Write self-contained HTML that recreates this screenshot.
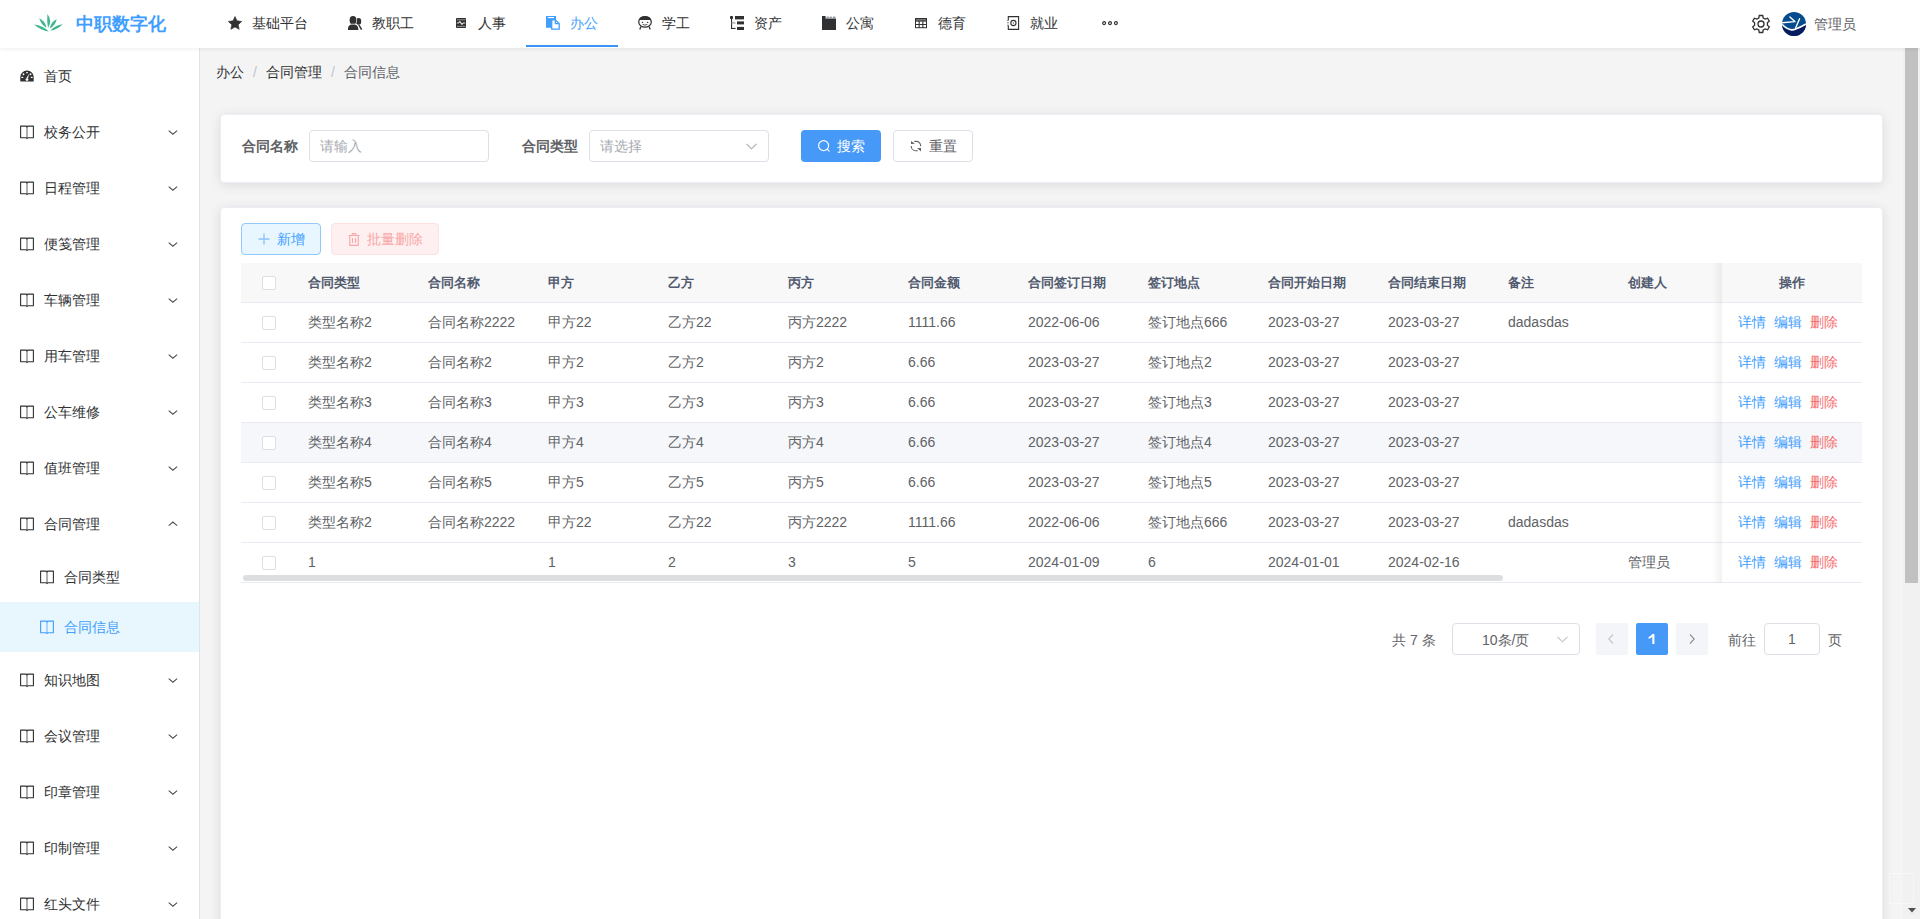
<!DOCTYPE html>
<html><head><meta charset="utf-8"><style>
*{box-sizing:border-box;margin:0;padding:0}
html,body{width:1920px;height:919px;overflow:hidden;background:#f4f4f4;font-family:"Liberation Sans",sans-serif;font-size:14px;color:#606266}
.abs{position:absolute}
#header{position:absolute;left:0;top:0;width:1920px;height:48px;background:#fff;box-shadow:0 1px 4px rgba(0,21,41,.08);z-index:10}
.logo-t{position:absolute;left:76px;top:12px;font-size:18px;font-weight:bold;color:#409eff;line-height:24px}
.nav{position:absolute;top:0;height:48px;color:#303133;white-space:nowrap}
.nav svg{position:absolute;top:16px}
.nav span{position:absolute;top:14px;line-height:18px}
.act{color:#409eff}
#side{position:absolute;left:0;top:48px;width:200px;height:871px;background:#fff;border-right:1px solid #e1e3ea;z-index:5;overflow:hidden}
.mi{position:absolute;left:0;width:199px;height:56px;color:#303133}
.mi svg.ic{position:absolute;left:20px;top:21px}
.mi span{position:absolute;left:44px;top:19px;line-height:18px}
.mi svg.ar{position:absolute;left:168px;top:26px}
.sub{height:50px}
.sub svg.ic{left:40px;top:18px}
.sub span{left:64px;top:16px}
.sub.act{background:#e8f6fe;color:#409eff}
.t{position:absolute;white-space:nowrap;line-height:18px}
.card{position:absolute;background:#fff;border:1px solid #ebeef5;border-radius:4px;box-shadow:0 2px 12px 0 rgba(0,0,0,.1)}
.lbl{position:absolute;font-weight:bold;color:#606266;line-height:18px;white-space:nowrap}
.box{position:absolute;border:1px solid #dcdfe6;border-radius:4px;background:#fff}
.cb{position:absolute;width:14px;height:14px;border:1px solid #dcdfe6;border-radius:2px;background:#fff}
.hd{font-weight:bold;color:#515a6e;font-size:13px}
.lk{color:#409eff}
.dl{color:#f56c6c}
</style></head><body>
<div id="header">
<svg class="abs" style="left:28px;top:8px" width="42" height="30" viewBox="0 0 42 30"><g fill="#40b690"><path d="M20.0 20.0 Q24.7 12.8 19.4 6.0 Q18.7 13.0 20.0 20.0Z"/><path d="M18.4 19.8 Q17.4 13.0 11.2 10.2 Q13.0 16.4 18.4 19.8Z"/><path d="M21.9 20.6 Q27.2 17.3 28.8 11.2 Q22.7 13.9 21.9 20.6Z"/><path d="M21.0 23.6 Q14.8 17.3 6.0 16.4 Q12.5 22.0 21.0 23.6Z"/><path d="M22.2 22.8 Q29.5 21.4 34.8 16.2 Q27.1 16.8 22.2 22.8Z"/></g></svg>
<div class="logo-t">中职数字化</div>
<div class="nav" style="left:228px;width:80px"><span style="left:24px">基础平台</span></div>
<div class="abs" style="left:228px;top:16px;width:16px;height:16px;line-height:0"><svg width="14" height="14" viewBox="0 0 14 14"><path fill="#303133" stroke="#303133" stroke-width="0.6" stroke-linejoin="round" d="M7.00 0.50 L9.00 4.85 L13.75 5.41 L10.23 8.65 L11.17 13.34 L7.00 11.00 L2.83 13.34 L3.77 8.65 L0.25 5.41 L5.00 4.85Z"/></svg></div>
<div class="nav" style="left:348px;width:66px"><span style="left:24px">教职工</span></div>
<div class="abs" style="left:348px;top:16px;width:16px;height:16px;line-height:0"><svg width="16" height="16" viewBox="0 0 16 16"><g fill="#303133"><ellipse cx="10.6" cy="5.4" rx="2.6" ry="3.3"/><path d="M10.2 9 L11.6 8.8 L14.3 13.2 L12.9 13.9Z"/></g><g fill="#303133" stroke="#fff" stroke-width="1.4" paint-order="stroke"><ellipse cx="5" cy="4.3" rx="3.4" ry="4.2"/><path d="M-0.2 14 C-0.2 10.2 1.4 8.7 3.6 8.4 L6.6 8.4 C8.8 8.7 10.4 10.2 10.4 14Z"/></g></svg></div>
<div class="nav" style="left:454px;width:52px"><span style="left:24px">人事</span></div>
<div class="abs" style="left:456px;top:18px;width:16px;height:16px;line-height:0"><svg width="10" height="10" viewBox="0 0 10 10"><rect x="0" y="0" width="10" height="10" rx="0.8" fill="#303133"/><rect x="1" y="1.4" width="8.4" height="0.9" fill="#a0a0a0"/><rect x="1" y="7.9" width="8.4" height="0.9" fill="#a0a0a0"/><path d="M0.8 5 L2.4 5 L3.9 3.6 L5.9 6.3 L7.2 5 L9.2 5" stroke="#e0e0e0" stroke-width="1.1" fill="none"/></svg></div>
<div class="nav act" style="left:546px;width:52px"><span style="left:24px">办公</span></div>
<div class="abs" style="left:546px;top:16px;width:16px;height:16px;line-height:0"><svg width="15" height="15" viewBox="0 0 15 15"><path fill="#409eff" d="M0 0 L10 0 L10 11.8 L0 11.8Z"/><rect x="1.8" y="1" width="6.2" height="1.1" fill="#fff"/><path d="M5.7 3.9 L9.4 3.9 L13.2 7.7 L13.2 13.2 L5.7 13.2Z" fill="#fff" stroke="#409eff" stroke-width="1.3" stroke-linejoin="miter"/><path d="M9.4 3.9 L9.4 7.7 L13.2 7.7" fill="none" stroke="#409eff" stroke-width="1.3"/></svg></div>
<div class="nav" style="left:638px;width:52px"><span style="left:24px">学工</span></div>
<div class="abs" style="left:638px;top:16px;width:16px;height:16px;line-height:0"><svg width="14" height="14" viewBox="0 0 14 14"><ellipse cx="7" cy="5.9" rx="6.3" ry="5.3" fill="none" stroke="#303133" stroke-width="1.25"/><path d="M0.8 4 C1.6 0.9 4 0.5 7 0.5 C10 0.5 12.4 0.9 13.2 4Z" fill="#303133"/><ellipse cx="4.4" cy="6.3" rx="0.8" ry="0.65" fill="#303133"/><ellipse cx="9.6" cy="6.3" rx="0.8" ry="0.65" fill="#303133"/><path d="M4.6 8.4 Q7 9.9 9.4 8.4" fill="none" stroke="#505257" stroke-width="1"/><path d="M2.8 10.8 L1.8 13.4 M11.2 10.8 L12.2 13.4" stroke="#303133" stroke-width="1.3"/></svg></div>
<div class="nav" style="left:730px;width:52px"><span style="left:24px">资产</span></div>
<div class="abs" style="left:730px;top:16px;width:16px;height:16px;line-height:0"><svg width="14" height="14" viewBox="0 0 14 14"><g fill="#303133"><rect x="0" y="0" width="3" height="3" rx="0.8"/><rect x="1" y="2.5" width="1.1" height="10.4"/><rect x="1" y="11.9" width="4.6" height="1.1"/><rect x="1.5" y="6.4" width="4" height="1.1" fill="#909399"/><rect x="5" y="0" width="9" height="3.4"/><rect x="7" y="5.4" width="7" height="3"/><rect x="7" y="10.9" width="7" height="3.1"/></g></svg></div>
<div class="nav" style="left:822px;width:52px"><span style="left:24px">公寓</span></div>
<div class="abs" style="left:822px;top:16px;width:16px;height:16px;line-height:0"><svg width="14" height="14" viewBox="0 0 14 14"><path d="M0 0 L3.6 0 L3.6 2.6 L14 2.6 L14 14 L0 14Z" fill="#303133"/><g fill="#909399"><rect x="4.6" y="0.6" width="2.2" height="1.6"/><rect x="7.6" y="0.6" width="2.2" height="1.6"/><rect x="10.8" y="0.6" width="2.6" height="1.6"/></g></svg></div>
<div class="nav" style="left:914px;width:52px"><span style="left:24px">德育</span></div>
<div class="abs" style="left:915px;top:18px;width:16px;height:16px;line-height:0"><svg width="12" height="11" viewBox="0 0 12 11"><rect x="0" y="0" width="12" height="10.2" fill="#303133"/><g fill="#fff"><rect x="1" y="3.6" width="2.6" height="2.4"/><rect x="4.7" y="3.6" width="2.6" height="2.4"/><rect x="8.4" y="3.6" width="2.6" height="2.4"/><rect x="1" y="7" width="2.6" height="2.2"/><rect x="4.7" y="7" width="2.6" height="2.2"/><rect x="8.4" y="7" width="2.6" height="2.2"/></g><rect x="1" y="1" width="10" height="1.6" fill="#777"/></svg></div>
<div class="nav" style="left:1006px;width:52px"><span style="left:24px">就业</span></div>
<div class="abs" style="left:1007px;top:16px;width:16px;height:16px;line-height:0"><svg width="13" height="14" viewBox="0 0 13 14"><path d="M1.3 4 L1.3 0.6 L11.6 0.6 L11.6 13.4 L1.3 13.4 L1.3 9.5" fill="none" stroke="#303133" stroke-width="1.1"/><circle cx="6.4" cy="7" r="2.6" fill="none" stroke="#303133" stroke-width="1.1"/><circle cx="6.4" cy="7" r="0.7" fill="#606266"/><path d="M0 4.3 L2 4.3 M0 6.8 L2 6.8 M0 9.2 L2 9.2" stroke="#606266" stroke-width="0.8"/></svg></div>
<svg class="abs" style="left:1101px;top:20px" width="18" height="6" viewBox="0 0 18 6"><g fill="none" stroke="#303133" stroke-width="1.2"><circle cx="3.1" cy="3.1" r="1.45"/><circle cx="9" cy="3.1" r="1.45"/><circle cx="14.9" cy="3.1" r="1.45"/></g></svg>
<div class="abs" style="left:526px;top:45px;width:92px;height:2px;background:#3a93f7"></div>
<svg class="abs" style="left:1751px;top:14px" width="20" height="20" viewBox="0 0 20 20"><path fill="none" stroke="#303133" stroke-width="1.3" d="M8.3 1.5 L11.7 1.5 L12.2 4 L14.2 5.1 L16.6 4.2 L18.3 7.2 L16.4 8.8 L16.4 11.2 L18.3 12.8 L16.6 15.8 L14.2 14.9 L12.2 16 L11.7 18.5 L8.3 18.5 L7.8 16 L5.8 14.9 L3.4 15.8 L1.7 12.8 L3.6 11.2 L3.6 8.8 L1.7 7.2 L3.4 4.2 L5.8 5.1 L7.8 4Z"/><circle cx="10" cy="10" r="3" fill="none" stroke="#303133" stroke-width="1.3"/></svg>
<svg class="abs" style="left:1782px;top:12px" width="24" height="24" viewBox="0 0 24 24"><defs><clipPath id="avc"><circle cx="12" cy="12" r="12"/></clipPath></defs><g clip-path="url(#avc)"><rect width="24" height="24" fill="#054c8e"/><path d="M0 12.4 Q5 17.2 9.5 17.9 Q13 18.2 24 12 L24 24 L0 24Z" fill="#061c5e"/><path d="M0 12.4 Q5 17.2 9.5 17.9 Q13 18.2 24 12" fill="none" stroke="#fff" stroke-width="1.6"/><path d="M0 10.7 L12.9 9.6 M7.9 5 L12.9 9.6 M17.6 6.8 L13.6 16" fill="none" stroke="#fff" stroke-width="1.4" stroke-linecap="round"/></g></svg>
<div class="t" style="left:1814px;top:15px;color:#606266">管理员</div>
</div>
<div id="side">
<div class="mi" style="top:0px"><svg class="ic" style="top:22px" width="14" height="12" viewBox="0 0 14 12"><path fill="#303133" d="M0.3 11.6 L0.3 7.5 C0.3 3.6 3.3 0.6 7 0.6 C10.7 0.6 13.7 3.6 13.7 7.5 L13.7 11.6Z"/><g fill="#fff"><rect x="6.1" y="2.1" width="1.8" height="1.2" rx="0.5"/><ellipse cx="3.5" cy="4.2" rx="0.9" ry="1"/><ellipse cx="10.5" cy="4.2" rx="0.9" ry="1"/><rect x="1.3" y="6.8" width="2" height="1.2" rx="0.5"/><rect x="10.7" y="6.8" width="2" height="1.2" rx="0.5"/><path d="M9.3 3.6 L7.9 8.6 L6.3 8.2Z"/><circle cx="7" cy="9.6" r="1.4"/></g></svg><span>首页</span></div>
<div class="mi" style="top:56px"><svg class="ic" style="top:21px" width="15" height="15" viewBox="0 0 15 15"><path d="M0.6 1.1 L5.8 1.1 Q6.7 1.1 7 2 Q7.3 1.1 8.2 1.1 L13.4 1.1 L13.4 12.7 L8.2 12.7 Q7.3 12.7 7 13.6 Q6.7 12.7 5.8 12.7 L0.6 12.7Z" fill="none" stroke="#303133" stroke-width="1.1" stroke-linejoin="round"/><path d="M7 2 L7 13" stroke="#303133" stroke-width="1.1" opacity="0.7"/></svg><span>校务公开</span><svg class="ar" width="10" height="6" viewBox="0 0 10 6"><path d="M0.7 0.6 L4.9 4.2 L9.1 0.6" fill="none" stroke="#4a4c50" stroke-width="1.05"/></svg></div>
<div class="mi" style="top:112px"><svg class="ic" style="top:21px" width="15" height="15" viewBox="0 0 15 15"><path d="M0.6 1.1 L5.8 1.1 Q6.7 1.1 7 2 Q7.3 1.1 8.2 1.1 L13.4 1.1 L13.4 12.7 L8.2 12.7 Q7.3 12.7 7 13.6 Q6.7 12.7 5.8 12.7 L0.6 12.7Z" fill="none" stroke="#303133" stroke-width="1.1" stroke-linejoin="round"/><path d="M7 2 L7 13" stroke="#303133" stroke-width="1.1" opacity="0.7"/></svg><span>日程管理</span><svg class="ar" width="10" height="6" viewBox="0 0 10 6"><path d="M0.7 0.6 L4.9 4.2 L9.1 0.6" fill="none" stroke="#4a4c50" stroke-width="1.05"/></svg></div>
<div class="mi" style="top:168px"><svg class="ic" style="top:21px" width="15" height="15" viewBox="0 0 15 15"><path d="M0.6 1.1 L5.8 1.1 Q6.7 1.1 7 2 Q7.3 1.1 8.2 1.1 L13.4 1.1 L13.4 12.7 L8.2 12.7 Q7.3 12.7 7 13.6 Q6.7 12.7 5.8 12.7 L0.6 12.7Z" fill="none" stroke="#303133" stroke-width="1.1" stroke-linejoin="round"/><path d="M7 2 L7 13" stroke="#303133" stroke-width="1.1" opacity="0.7"/></svg><span>便笺管理</span><svg class="ar" width="10" height="6" viewBox="0 0 10 6"><path d="M0.7 0.6 L4.9 4.2 L9.1 0.6" fill="none" stroke="#4a4c50" stroke-width="1.05"/></svg></div>
<div class="mi" style="top:224px"><svg class="ic" style="top:21px" width="15" height="15" viewBox="0 0 15 15"><path d="M0.6 1.1 L5.8 1.1 Q6.7 1.1 7 2 Q7.3 1.1 8.2 1.1 L13.4 1.1 L13.4 12.7 L8.2 12.7 Q7.3 12.7 7 13.6 Q6.7 12.7 5.8 12.7 L0.6 12.7Z" fill="none" stroke="#303133" stroke-width="1.1" stroke-linejoin="round"/><path d="M7 2 L7 13" stroke="#303133" stroke-width="1.1" opacity="0.7"/></svg><span>车辆管理</span><svg class="ar" width="10" height="6" viewBox="0 0 10 6"><path d="M0.7 0.6 L4.9 4.2 L9.1 0.6" fill="none" stroke="#4a4c50" stroke-width="1.05"/></svg></div>
<div class="mi" style="top:280px"><svg class="ic" style="top:21px" width="15" height="15" viewBox="0 0 15 15"><path d="M0.6 1.1 L5.8 1.1 Q6.7 1.1 7 2 Q7.3 1.1 8.2 1.1 L13.4 1.1 L13.4 12.7 L8.2 12.7 Q7.3 12.7 7 13.6 Q6.7 12.7 5.8 12.7 L0.6 12.7Z" fill="none" stroke="#303133" stroke-width="1.1" stroke-linejoin="round"/><path d="M7 2 L7 13" stroke="#303133" stroke-width="1.1" opacity="0.7"/></svg><span>用车管理</span><svg class="ar" width="10" height="6" viewBox="0 0 10 6"><path d="M0.7 0.6 L4.9 4.2 L9.1 0.6" fill="none" stroke="#4a4c50" stroke-width="1.05"/></svg></div>
<div class="mi" style="top:336px"><svg class="ic" style="top:21px" width="15" height="15" viewBox="0 0 15 15"><path d="M0.6 1.1 L5.8 1.1 Q6.7 1.1 7 2 Q7.3 1.1 8.2 1.1 L13.4 1.1 L13.4 12.7 L8.2 12.7 Q7.3 12.7 7 13.6 Q6.7 12.7 5.8 12.7 L0.6 12.7Z" fill="none" stroke="#303133" stroke-width="1.1" stroke-linejoin="round"/><path d="M7 2 L7 13" stroke="#303133" stroke-width="1.1" opacity="0.7"/></svg><span>公车维修</span><svg class="ar" width="10" height="6" viewBox="0 0 10 6"><path d="M0.7 0.6 L4.9 4.2 L9.1 0.6" fill="none" stroke="#4a4c50" stroke-width="1.05"/></svg></div>
<div class="mi" style="top:392px"><svg class="ic" style="top:21px" width="15" height="15" viewBox="0 0 15 15"><path d="M0.6 1.1 L5.8 1.1 Q6.7 1.1 7 2 Q7.3 1.1 8.2 1.1 L13.4 1.1 L13.4 12.7 L8.2 12.7 Q7.3 12.7 7 13.6 Q6.7 12.7 5.8 12.7 L0.6 12.7Z" fill="none" stroke="#303133" stroke-width="1.1" stroke-linejoin="round"/><path d="M7 2 L7 13" stroke="#303133" stroke-width="1.1" opacity="0.7"/></svg><span>值班管理</span><svg class="ar" width="10" height="6" viewBox="0 0 10 6"><path d="M0.7 0.6 L4.9 4.2 L9.1 0.6" fill="none" stroke="#4a4c50" stroke-width="1.05"/></svg></div>
<div class="mi" style="top:448px"><svg class="ic" style="top:21px" width="15" height="15" viewBox="0 0 15 15"><path d="M0.6 1.1 L5.8 1.1 Q6.7 1.1 7 2 Q7.3 1.1 8.2 1.1 L13.4 1.1 L13.4 12.7 L8.2 12.7 Q7.3 12.7 7 13.6 Q6.7 12.7 5.8 12.7 L0.6 12.7Z" fill="none" stroke="#303133" stroke-width="1.1" stroke-linejoin="round"/><path d="M7 2 L7 13" stroke="#303133" stroke-width="1.1" opacity="0.7"/></svg><span>合同管理</span><svg class="ar" style="top:25px" width="10" height="6" viewBox="0 0 10 6"><path d="M0.7 4.6 L4.9 1 L9.1 4.6" fill="none" stroke="#4a4c50" stroke-width="1.05"/></svg></div>
<div class="mi sub" style="top:504px"><svg class="ic" style="top:18px" width="15" height="15" viewBox="0 0 15 15"><path d="M0.6 1.1 L5.8 1.1 Q6.7 1.1 7 2 Q7.3 1.1 8.2 1.1 L13.4 1.1 L13.4 12.7 L8.2 12.7 Q7.3 12.7 7 13.6 Q6.7 12.7 5.8 12.7 L0.6 12.7Z" fill="none" stroke="#303133" stroke-width="1.1" stroke-linejoin="round"/><path d="M7 2 L7 13" stroke="#303133" stroke-width="1.1" opacity="0.7"/></svg><span>合同类型</span></div>
<div class="mi sub act" style="top:554px"><svg class="ic" style="top:18px" width="15" height="15" viewBox="0 0 15 15"><path d="M0.6 1.1 L5.8 1.1 Q6.7 1.1 7 2 Q7.3 1.1 8.2 1.1 L13.4 1.1 L13.4 12.7 L8.2 12.7 Q7.3 12.7 7 13.6 Q6.7 12.7 5.8 12.7 L0.6 12.7Z" fill="none" stroke="#409eff" stroke-width="1.1" stroke-linejoin="round"/><path d="M7 2 L7 13" stroke="#409eff" stroke-width="1.1" opacity="0.7"/></svg><span>合同信息</span></div>
<div class="mi" style="top:604px"><svg class="ic" style="top:21px" width="15" height="15" viewBox="0 0 15 15"><path d="M0.6 1.1 L5.8 1.1 Q6.7 1.1 7 2 Q7.3 1.1 8.2 1.1 L13.4 1.1 L13.4 12.7 L8.2 12.7 Q7.3 12.7 7 13.6 Q6.7 12.7 5.8 12.7 L0.6 12.7Z" fill="none" stroke="#303133" stroke-width="1.1" stroke-linejoin="round"/><path d="M7 2 L7 13" stroke="#303133" stroke-width="1.1" opacity="0.7"/></svg><span>知识地图</span><svg class="ar" width="10" height="6" viewBox="0 0 10 6"><path d="M0.7 0.6 L4.9 4.2 L9.1 0.6" fill="none" stroke="#4a4c50" stroke-width="1.05"/></svg></div>
<div class="mi" style="top:660px"><svg class="ic" style="top:21px" width="15" height="15" viewBox="0 0 15 15"><path d="M0.6 1.1 L5.8 1.1 Q6.7 1.1 7 2 Q7.3 1.1 8.2 1.1 L13.4 1.1 L13.4 12.7 L8.2 12.7 Q7.3 12.7 7 13.6 Q6.7 12.7 5.8 12.7 L0.6 12.7Z" fill="none" stroke="#303133" stroke-width="1.1" stroke-linejoin="round"/><path d="M7 2 L7 13" stroke="#303133" stroke-width="1.1" opacity="0.7"/></svg><span>会议管理</span><svg class="ar" width="10" height="6" viewBox="0 0 10 6"><path d="M0.7 0.6 L4.9 4.2 L9.1 0.6" fill="none" stroke="#4a4c50" stroke-width="1.05"/></svg></div>
<div class="mi" style="top:716px"><svg class="ic" style="top:21px" width="15" height="15" viewBox="0 0 15 15"><path d="M0.6 1.1 L5.8 1.1 Q6.7 1.1 7 2 Q7.3 1.1 8.2 1.1 L13.4 1.1 L13.4 12.7 L8.2 12.7 Q7.3 12.7 7 13.6 Q6.7 12.7 5.8 12.7 L0.6 12.7Z" fill="none" stroke="#303133" stroke-width="1.1" stroke-linejoin="round"/><path d="M7 2 L7 13" stroke="#303133" stroke-width="1.1" opacity="0.7"/></svg><span>印章管理</span><svg class="ar" width="10" height="6" viewBox="0 0 10 6"><path d="M0.7 0.6 L4.9 4.2 L9.1 0.6" fill="none" stroke="#4a4c50" stroke-width="1.05"/></svg></div>
<div class="mi" style="top:772px"><svg class="ic" style="top:21px" width="15" height="15" viewBox="0 0 15 15"><path d="M0.6 1.1 L5.8 1.1 Q6.7 1.1 7 2 Q7.3 1.1 8.2 1.1 L13.4 1.1 L13.4 12.7 L8.2 12.7 Q7.3 12.7 7 13.6 Q6.7 12.7 5.8 12.7 L0.6 12.7Z" fill="none" stroke="#303133" stroke-width="1.1" stroke-linejoin="round"/><path d="M7 2 L7 13" stroke="#303133" stroke-width="1.1" opacity="0.7"/></svg><span>印制管理</span><svg class="ar" width="10" height="6" viewBox="0 0 10 6"><path d="M0.7 0.6 L4.9 4.2 L9.1 0.6" fill="none" stroke="#4a4c50" stroke-width="1.05"/></svg></div>
<div class="mi" style="top:828px"><svg class="ic" style="top:21px" width="15" height="15" viewBox="0 0 15 15"><path d="M0.6 1.1 L5.8 1.1 Q6.7 1.1 7 2 Q7.3 1.1 8.2 1.1 L13.4 1.1 L13.4 12.7 L8.2 12.7 Q7.3 12.7 7 13.6 Q6.7 12.7 5.8 12.7 L0.6 12.7Z" fill="none" stroke="#303133" stroke-width="1.1" stroke-linejoin="round"/><path d="M7 2 L7 13" stroke="#303133" stroke-width="1.1" opacity="0.7"/></svg><span>红头文件</span><svg class="ar" width="10" height="6" viewBox="0 0 10 6"><path d="M0.7 0.6 L4.9 4.2 L9.1 0.6" fill="none" stroke="#4a4c50" stroke-width="1.05"/></svg></div>
</div>
<div class="t" style="left:216px;top:63px;color:#303133">办公</div>
<div class="t" style="left:253px;top:63px;color:#c0c4cc">/</div>
<div class="t" style="left:266px;top:63px;color:#303133">合同管理</div>
<div class="t" style="left:331px;top:63px;color:#c0c4cc">/</div>
<div class="t" style="left:344px;top:63px;color:#606266">合同信息</div>
<div class="card" style="left:220px;top:114px;width:1663px;height:69px"></div>
<div class="lbl" style="left:242px;top:137px">合同名称</div>
<div class="box" style="left:309px;top:130px;width:180px;height:32px"></div>
<div class="t" style="left:320px;top:137px;color:#a8abb2">请输入</div>
<div class="lbl" style="left:522px;top:137px">合同类型</div>
<div class="box" style="left:589px;top:130px;width:180px;height:32px"></div>
<div class="t" style="left:600px;top:137px;color:#a8abb2">请选择</div>
<svg class="abs" style="left:746px;top:143px" width="11" height="7" viewBox="0 0 11 7"><path d="M0.5 0.8 L5.5 5.8 L10.5 0.8" fill="none" stroke="#a8abb2" stroke-width="1.1"/></svg>
<div class="abs" style="left:801px;top:130px;width:80px;height:32px;background:#4799f8;border-radius:4px"></div>
<svg class="abs" style="left:818px;top:140px" width="14" height="14" viewBox="0 0 14 14"><circle cx="5.6" cy="5.6" r="5" fill="none" stroke="#fff" stroke-width="1.15"/><path d="M9.3 9.3 L11.2 11.2" stroke="#fff" stroke-width="1.15" stroke-linecap="round"/></svg>
<div class="t" style="left:837px;top:137px;color:#fff">搜索</div>
<div class="box" style="left:893px;top:130px;width:80px;height:32px"></div>
<svg class="abs" style="left:910px;top:140px" width="12" height="12" viewBox="0 0 12 12"><g fill="none" stroke="#606266" stroke-width="1.1"><path d="M4.3 1.4 L6.2 1.4 A4.4 4.4 0 0 1 10.6 5.8 L10.6 6.2"/><path d="M1.3 6 L1.3 6.4 A4.4 4.4 0 0 0 5.7 10.7 L7.8 10.7"/></g><g fill="#606266"><path d="M1 0.9 L1 4 L5 3.7Z"/><path d="M7.1 8.1 L11 8.1 L11 11.4Z"/></g></svg>
<div class="t" style="left:929px;top:137px;color:#606266">重置</div>
<div class="card" style="left:220px;top:207px;width:1663px;height:760px"></div>
<div class="abs" style="left:241px;top:223px;width:80px;height:32px;background:#e8f6ff;border:1px solid #92c8fb;border-radius:4px"></div>
<svg class="abs" style="left:258px;top:233px" width="12" height="12" viewBox="0 0 12 12"><path d="M6 0.5 L6 11.5 M0.5 6 L11.5 6" stroke="#8cc4fa" stroke-width="1.3"/></svg>
<div class="t" style="left:277px;top:230px;color:#409eff">新增</div>
<div class="abs" style="left:331px;top:223px;width:108px;height:32px;background:#fef0f0;border:1px solid #fde2e2;border-radius:4px"></div>
<svg class="abs" style="left:348px;top:233px" width="12" height="13" viewBox="0 0 12 13"><g fill="none" stroke="#f9a7a7" stroke-width="1.1"><path d="M0.5 2.5 L11.5 2.5 M4.3 2.5 L4.3 0.6 L7.7 0.6 L7.7 2.5 M1.8 2.5 L1.8 12.4 L10.2 12.4 L10.2 2.5 M4.5 5 L4.5 10 M7.5 5 L7.5 10"/></g></svg>
<div class="t" style="left:367px;top:230px;color:#f9a7a7">批量删除</div>
<div class="abs" style="left:241px;top:263px;width:1621px;height:40px;background:#f8f8f9;border-bottom:1px solid #e8ebf1"></div>
<div class="cb" style="left:262px;top:276px"></div>
<div class="t hd" style="left:308px;top:274px">合同类型</div>
<div class="t hd" style="left:428px;top:274px">合同名称</div>
<div class="t hd" style="left:548px;top:274px">甲方</div>
<div class="t hd" style="left:668px;top:274px">乙方</div>
<div class="t hd" style="left:788px;top:274px">丙方</div>
<div class="t hd" style="left:908px;top:274px">合同金额</div>
<div class="t hd" style="left:1028px;top:274px">合同签订日期</div>
<div class="t hd" style="left:1148px;top:274px">签订地点</div>
<div class="t hd" style="left:1268px;top:274px">合同开始日期</div>
<div class="t hd" style="left:1388px;top:274px">合同结束日期</div>
<div class="t hd" style="left:1508px;top:274px">备注</div>
<div class="t hd" style="left:1628px;top:274px">创建人</div>
<div class="abs" style="left:241px;top:303px;width:1621px;height:40px;background:#fff;border-bottom:1px solid #e8ebf1"></div>
<div class="cb" style="left:262px;top:316px"></div>
<div class="t" style="left:308px;top:313px">类型名称2</div>
<div class="t" style="left:428px;top:313px">合同名称2222</div>
<div class="t" style="left:548px;top:313px">甲方22</div>
<div class="t" style="left:668px;top:313px">乙方22</div>
<div class="t" style="left:788px;top:313px">丙方2222</div>
<div class="t" style="left:908px;top:313px">1111.66</div>
<div class="t" style="left:1028px;top:313px">2022-06-06</div>
<div class="t" style="left:1148px;top:313px">签订地点666</div>
<div class="t" style="left:1268px;top:313px">2023-03-27</div>
<div class="t" style="left:1388px;top:313px">2023-03-27</div>
<div class="t" style="left:1508px;top:313px">dadasdas</div>
<div class="abs" style="left:241px;top:343px;width:1621px;height:40px;background:#fff;border-bottom:1px solid #e8ebf1"></div>
<div class="cb" style="left:262px;top:356px"></div>
<div class="t" style="left:308px;top:353px">类型名称2</div>
<div class="t" style="left:428px;top:353px">合同名称2</div>
<div class="t" style="left:548px;top:353px">甲方2</div>
<div class="t" style="left:668px;top:353px">乙方2</div>
<div class="t" style="left:788px;top:353px">丙方2</div>
<div class="t" style="left:908px;top:353px">6.66</div>
<div class="t" style="left:1028px;top:353px">2023-03-27</div>
<div class="t" style="left:1148px;top:353px">签订地点2</div>
<div class="t" style="left:1268px;top:353px">2023-03-27</div>
<div class="t" style="left:1388px;top:353px">2023-03-27</div>
<div class="abs" style="left:241px;top:383px;width:1621px;height:40px;background:#fff;border-bottom:1px solid #e8ebf1"></div>
<div class="cb" style="left:262px;top:396px"></div>
<div class="t" style="left:308px;top:393px">类型名称3</div>
<div class="t" style="left:428px;top:393px">合同名称3</div>
<div class="t" style="left:548px;top:393px">甲方3</div>
<div class="t" style="left:668px;top:393px">乙方3</div>
<div class="t" style="left:788px;top:393px">丙方3</div>
<div class="t" style="left:908px;top:393px">6.66</div>
<div class="t" style="left:1028px;top:393px">2023-03-27</div>
<div class="t" style="left:1148px;top:393px">签订地点3</div>
<div class="t" style="left:1268px;top:393px">2023-03-27</div>
<div class="t" style="left:1388px;top:393px">2023-03-27</div>
<div class="abs" style="left:241px;top:423px;width:1621px;height:40px;background:#f5f7fa;border-bottom:1px solid #e8ebf1"></div>
<div class="cb" style="left:262px;top:436px"></div>
<div class="t" style="left:308px;top:433px">类型名称4</div>
<div class="t" style="left:428px;top:433px">合同名称4</div>
<div class="t" style="left:548px;top:433px">甲方4</div>
<div class="t" style="left:668px;top:433px">乙方4</div>
<div class="t" style="left:788px;top:433px">丙方4</div>
<div class="t" style="left:908px;top:433px">6.66</div>
<div class="t" style="left:1028px;top:433px">2023-03-27</div>
<div class="t" style="left:1148px;top:433px">签订地点4</div>
<div class="t" style="left:1268px;top:433px">2023-03-27</div>
<div class="t" style="left:1388px;top:433px">2023-03-27</div>
<div class="abs" style="left:241px;top:463px;width:1621px;height:40px;background:#fff;border-bottom:1px solid #e8ebf1"></div>
<div class="cb" style="left:262px;top:476px"></div>
<div class="t" style="left:308px;top:473px">类型名称5</div>
<div class="t" style="left:428px;top:473px">合同名称5</div>
<div class="t" style="left:548px;top:473px">甲方5</div>
<div class="t" style="left:668px;top:473px">乙方5</div>
<div class="t" style="left:788px;top:473px">丙方5</div>
<div class="t" style="left:908px;top:473px">6.66</div>
<div class="t" style="left:1028px;top:473px">2023-03-27</div>
<div class="t" style="left:1148px;top:473px">签订地点5</div>
<div class="t" style="left:1268px;top:473px">2023-03-27</div>
<div class="t" style="left:1388px;top:473px">2023-03-27</div>
<div class="abs" style="left:241px;top:503px;width:1621px;height:40px;background:#fff;border-bottom:1px solid #e8ebf1"></div>
<div class="cb" style="left:262px;top:516px"></div>
<div class="t" style="left:308px;top:513px">类型名称2</div>
<div class="t" style="left:428px;top:513px">合同名称2222</div>
<div class="t" style="left:548px;top:513px">甲方22</div>
<div class="t" style="left:668px;top:513px">乙方22</div>
<div class="t" style="left:788px;top:513px">丙方2222</div>
<div class="t" style="left:908px;top:513px">1111.66</div>
<div class="t" style="left:1028px;top:513px">2022-06-06</div>
<div class="t" style="left:1148px;top:513px">签订地点666</div>
<div class="t" style="left:1268px;top:513px">2023-03-27</div>
<div class="t" style="left:1388px;top:513px">2023-03-27</div>
<div class="t" style="left:1508px;top:513px">dadasdas</div>
<div class="abs" style="left:241px;top:543px;width:1621px;height:40px;background:#fff;border-bottom:1px solid #e8ebf1"></div>
<div class="cb" style="left:262px;top:556px"></div>
<div class="t" style="left:308px;top:553px">1</div>
<div class="t" style="left:548px;top:553px">1</div>
<div class="t" style="left:668px;top:553px">2</div>
<div class="t" style="left:788px;top:553px">3</div>
<div class="t" style="left:908px;top:553px">5</div>
<div class="t" style="left:1028px;top:553px">2024-01-09</div>
<div class="t" style="left:1148px;top:553px">6</div>
<div class="t" style="left:1268px;top:553px">2024-01-01</div>
<div class="t" style="left:1388px;top:553px">2024-02-16</div>
<div class="t" style="left:1628px;top:553px">管理员</div>
<div class="abs" style="left:243px;top:575px;width:1260px;height:6px;background:#dddee0;border-radius:4px"></div>
<div class="abs" style="left:1712px;top:263px;width:10px;height:320px;background:linear-gradient(to right,rgba(0,0,0,0),rgba(0,0,0,.05))"></div>
<div class="abs" style="left:1722px;top:263px;width:140px;height:40px;background:#f8f8f9;border-bottom:1px solid #e8ebf1"></div>
<div class="t hd" style="left:1779px;top:274px">操作</div>
<div class="abs" style="left:1722px;top:303px;width:140px;height:40px;background:#fff;border-bottom:1px solid #e8ebf1"></div>
<div class="t lk" style="left:1738px;top:313px">详情</div>
<div class="t lk" style="left:1774px;top:313px">编辑</div>
<div class="t dl" style="left:1810px;top:313px">删除</div>
<div class="abs" style="left:1722px;top:343px;width:140px;height:40px;background:#fff;border-bottom:1px solid #e8ebf1"></div>
<div class="t lk" style="left:1738px;top:353px">详情</div>
<div class="t lk" style="left:1774px;top:353px">编辑</div>
<div class="t dl" style="left:1810px;top:353px">删除</div>
<div class="abs" style="left:1722px;top:383px;width:140px;height:40px;background:#fff;border-bottom:1px solid #e8ebf1"></div>
<div class="t lk" style="left:1738px;top:393px">详情</div>
<div class="t lk" style="left:1774px;top:393px">编辑</div>
<div class="t dl" style="left:1810px;top:393px">删除</div>
<div class="abs" style="left:1722px;top:423px;width:140px;height:40px;background:#f5f7fa;border-bottom:1px solid #e8ebf1"></div>
<div class="t lk" style="left:1738px;top:433px">详情</div>
<div class="t lk" style="left:1774px;top:433px">编辑</div>
<div class="t dl" style="left:1810px;top:433px">删除</div>
<div class="abs" style="left:1722px;top:463px;width:140px;height:40px;background:#fff;border-bottom:1px solid #e8ebf1"></div>
<div class="t lk" style="left:1738px;top:473px">详情</div>
<div class="t lk" style="left:1774px;top:473px">编辑</div>
<div class="t dl" style="left:1810px;top:473px">删除</div>
<div class="abs" style="left:1722px;top:503px;width:140px;height:40px;background:#fff;border-bottom:1px solid #e8ebf1"></div>
<div class="t lk" style="left:1738px;top:513px">详情</div>
<div class="t lk" style="left:1774px;top:513px">编辑</div>
<div class="t dl" style="left:1810px;top:513px">删除</div>
<div class="abs" style="left:1722px;top:543px;width:140px;height:40px;background:#fff;border-bottom:1px solid #e8ebf1"></div>
<div class="t lk" style="left:1738px;top:553px">详情</div>
<div class="t lk" style="left:1774px;top:553px">编辑</div>
<div class="t dl" style="left:1810px;top:553px">删除</div>
<div class="t" style="left:1392px;top:631px;color:#606266">共 7 条</div>
<div class="box" style="left:1452px;top:623px;width:128px;height:32px"></div>
<div class="t" style="left:1482px;top:631px;color:#606266">10条/页</div>
<svg class="abs" style="left:1557px;top:636px" width="11" height="7" viewBox="0 0 11 7"><path d="M0.5 0.8 L5.5 5.8 L10.5 0.8" fill="none" stroke="#c0c4cc" stroke-width="1.1"/></svg>
<div class="abs" style="left:1596px;top:623px;width:32px;height:32px;background:#f4f5f8;border-radius:2px"></div>
<svg class="abs" style="left:1608px;top:634px" width="6" height="10" viewBox="0 0 6 10"><path d="M5 0.5 L0.8 5 L5 9.5" fill="none" stroke="#c0c4cc" stroke-width="1.1"/></svg>
<div class="abs" style="left:1636px;top:623px;width:32px;height:32px;background:#4799f8;border-radius:2px"></div>
<svg class="abs" style="left:1648px;top:634px" width="7" height="10" viewBox="0 0 7 10"><path d="M4.3 0 L6.4 0 L6.4 10 L4.3 10 L4.3 3.1 Q2.9 4.3 0.6 4.9 L0.6 3 Q3.1 2 4.3 0Z" fill="#fff"/></svg>
<div class="abs" style="left:1676px;top:623px;width:32px;height:32px;background:#f4f5f8;border-radius:2px"></div>
<svg class="abs" style="left:1689px;top:634px" width="6" height="10" viewBox="0 0 6 10"><path d="M1 0.5 L5.2 5 L1 9.5" fill="none" stroke="#8a8d93" stroke-width="1.1"/></svg>
<div class="t" style="left:1728px;top:631px;color:#606266">前往</div>
<div class="box" style="left:1764px;top:623px;width:56px;height:32px"></div>
<div class="t" style="left:1788px;top:630px;color:#606266">1</div>
<div class="t" style="left:1828px;top:631px;color:#606266">页</div>
<div class="abs" style="left:1903px;top:48px;width:17px;height:871px;background:#f1f1f1"></div>
<div class="abs" style="left:1905px;top:48px;width:13px;height:535px;background:#c1c1c1"></div>
<div class="abs" style="left:1889px;top:873px;width:25px;height:31px;border:1px solid rgba(255,255,255,.45)"></div>
<svg class="abs" style="left:1907.5px;top:908px" width="8" height="5" viewBox="0 0 8 5"><path d="M0 0 L8 0 L4 4.5Z" fill="#505050"/></svg>
</body></html>
